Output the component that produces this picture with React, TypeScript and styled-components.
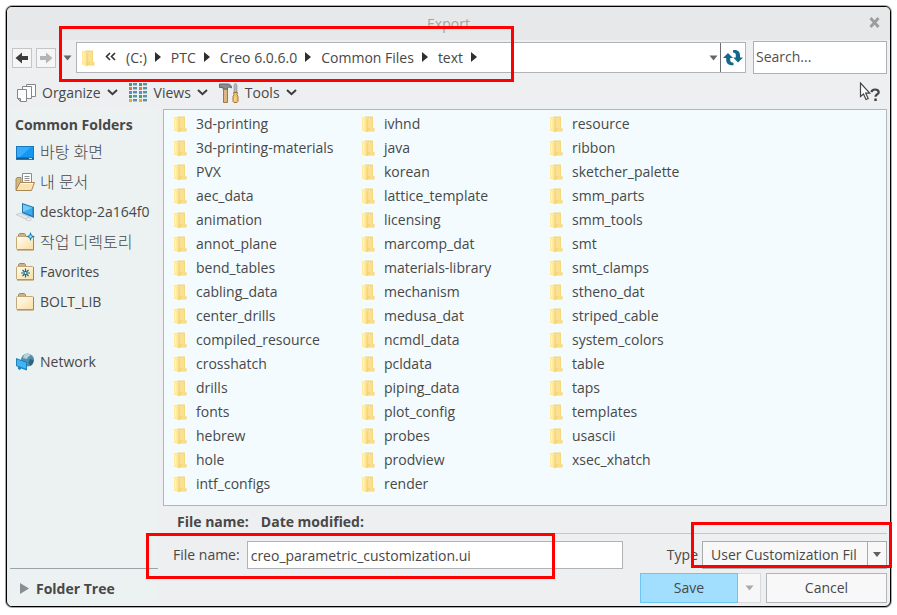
import React from "react";
import styled, { createGlobalStyle } from "styled-components";

const GlobalStyle = createGlobalStyle`
  *, *::before, *::after { box-sizing: border-box; }
  body { margin: 0; background: #fff; }
  body, button, input, select {
    font-family: "Open Sans", "Noto Sans CJK KR", sans-serif;
    font-size: 14px;
    line-height: 20px;
    color: #484848;
  }
  button { background: none; border: 0; padding: 0; margin: 0; cursor: pointer; white-space: nowrap; }
  svg { display: block; flex: none; }
`;

const Page = styled.div`
  padding: 6px;
`;

const Dialog = styled.section`
  border: 1px solid #000;
  border-radius: 6px;
  box-shadow: 0 0 0 1px #a9adaa;
  background: #eeeff1;
`;

const TitleBar = styled.header`
  position: relative;
  display: flex;
  align-items: center;
  justify-content: center;
  height: 33px;
  border-radius: 5px 5px 0 0;
  background: #e6e8e9;
`;

const Title = styled.h1`
  margin: 0;
  font-size: 14px;
  font-weight: 400;
  color: #a3a3a3;
`;

const CloseButton = styled.button`
  position: absolute;
  right: 10px;
  top: 10px;
`;

const NavRow = styled.div`
  display: flex;
  align-items: center;
  height: 35px;
  padding: 0 3px 0 5px;
`;

const HistoryButton = styled.button`
  display: grid;
  place-items: center;
  width: 20px;
  height: 20px;
  margin-right: 4px;
  border: 1px solid #c3c5c6;
  background: #f6f6f6;
`;

const HistoryMenu = styled.button`
  display: grid;
  place-items: center;
  width: 16px;
  height: 20px;
  padding-right: 2px;
`;

const AddressBar = styled.div`
  position: relative;
  display: flex;
  align-items: stretch;
  flex: 1;
  min-width: 0;
  height: 31px;
  border: 1px solid #b1b3b6;
  background: #fff;
`;

const Crumbs = styled.nav`
  display: flex;
  align-items: center;
  flex: 1;
  min-width: 0;
  overflow: hidden;
  padding-left: 4px;
  gap: 10px;
`;

const Crumb = styled.button`
  display: flex;
  align-items: center;
  gap: 8px;
`;

const AddressTool = styled.button<{ $divided?: boolean }>`
  display: grid;
  place-items: center;
  width: ${(p) => (p.$divided ? 25 : 14)}px;
  border-left: ${(p) => (p.$divided ? "1px solid #6c6e70" : "0")};
`;

const SearchBox = styled.input`
  width: 134px;
  height: 33px;
  margin-left: 7px;
  padding: 0 2px 2px;
  border: 1px solid #aeb1b4;
  border-radius: 0;
  background: #fff;
  &::placeholder { color: #505050; opacity: 1; }
`;

const ToolRow = styled.div`
  display: flex;
  align-items: center;
  gap: 11px;
  height: 34px;
  padding: 1px 9px 0;
`;

const ToolButton = styled.button`
  display: flex;
  align-items: center;
  gap: 6px;
`;

const HelpButton = styled.button`
  margin-left: auto;
`;

const Body = styled.div`
  display: grid;
  grid-template-columns: 148px minmax(0, 1fr);
  gap: 5px;
  padding: 0 3px;
`;

const Sidebar = styled.aside`
  display: flex;
  flex-direction: column;
  background: #ecf1f1;
`;

const SideHeading = styled.h2`
  height: 28px;
  margin: 0;
  padding: 6px 0 0 5px;
  font-size: 14px;
  line-height: 20px;
  font-weight: 700;
`;

const Places = styled.ul`
  flex: 1;
  margin: 0;
  padding: 0;
  list-style: none;
`;

const Place = styled.li<{ $apart?: boolean }>`
  margin-top: ${(p) => (p.$apart ? 30 : 0)}px;
`;

const PlaceButton = styled.button`
  display: flex;
  align-items: center;
  gap: 5px;
  height: 30px;
  padding-left: 5px;
  &:lang(ko) { font-size: 16px; font-weight: 300; }
`;

const TreeToggle = styled.button`
  display: flex;
  align-items: center;
  gap: 7px;
  height: 38px;
  padding: 2px 0 0 10px;
  border-top: 1px solid #9aa3a8;
  font-weight: 700;
`;

const Content = styled.main`
  display: flex;
  flex-direction: column;
  min-width: 0;
  padding-bottom: 3px;
`;

const FileList = styled.ul`
  display: grid;
  grid-auto-flow: column;
  grid-template-rows: repeat(16, 24px);
  grid-auto-columns: 188px;
  margin: 0;
  padding: 2px 0 9px 9px;
  overflow: hidden;
  list-style: none;
  border: 1px solid #b3b6b9;
  background: #f3fbfe;
`;

const FolderButton = styled.button`
  display: flex;
  align-items: center;
  gap: 9px;
  height: 24px;
`;

const MetaRow = styled.div`
  display: flex;
  gap: 12px;
  height: 28px;
  padding: 6px 14px 0;
  border-bottom: 1px solid #c4c7ca;
  font-weight: 700;
`;

const FieldRow = styled.div`
  display: flex;
  justify-content: space-between;
  gap: 44px;
  margin-top: 7px;
`;

const Field = styled.div<{ $grow?: boolean }>`
  position: relative;
  display: flex;
  align-items: center;
  flex: ${(p) => (p.$grow ? "1" : "none")};
  gap: ${(p) => (p.$grow ? 7 : 4)}px;
  padding-left: ${(p) => (p.$grow ? 10 : 0)}px;
`;

const NameInput = styled.input`
  flex: 1;
  min-width: 0;
  height: 28px;
  padding: 0 3px;
  border: 1px solid #b1b4b7;
  border-radius: 0;
  background: #fff;
`;

const SelectFrame = styled.div`
  display: flex;
  width: 185px;
  height: 28px;
  border: 1px solid #a9acaf;
  background: linear-gradient(90deg, #f8f8f8 164px, #a9acaf 164px 165px, #f8f8f8 165px);
`;

const TypeSelect = styled.select`
  width: 183px;
  padding: 0 30px 0 8px;
  appearance: none;
  border: 0;
  background: url("data:image/svg+xml,%3Csvg xmlns='http://www.w3.org/2000/svg' width='10' height='6'%3E%3Cpath d='M1 0h8L5 5z' fill='%23606060'/%3E%3C/svg%3E") no-repeat right 4px center;
`;

const Actions = styled.div`
  display: flex;
  justify-content: flex-end;
  margin-top: 4px;
`;

const SaveButton = styled.button`
  width: 98px;
  height: 30px;
  border: 1px solid #6bc6f5;
  background: #a2dfff;
`;

const SaveMenu = styled.button`
  display: grid;
  place-items: center;
  width: 23px;
  height: 30px;
  margin-right: 5px;
  border: 1px solid #d8dadc;
  border-left: 0;
  background: #f7f7f7;
`;

const CancelButton = styled.button`
  width: 121px;
  height: 30px;
  border: 1px solid #b3b5b8;
  background: #f8f8f8;
`;

/* Red call-out frames laid over the parts they point at. */
const Callout = styled.div`
  position: absolute;
  z-index: 2;
  border: 3px solid #fe0000;
  pointer-events: none;
`;

const PathCallout = styled(Callout)`
  left: -18px;
  top: -17px;
  width: 455px;
  height: 56px;
`;

const NameCallout = styled(Callout)`
  left: -17px;
  right: 68px;
  top: -8px;
  bottom: -10px;
`;

const TypeCallout = styled(Callout)`
  left: 24px;
  right: -5px;
  top: -19px;
  bottom: 1px;
`;

const CaretDown = ({ color = "#666" }: { color?: string }) => (
  <svg width="9" height="6" viewBox="0 0 9 6"><path d="M0.500 0.500h8l-4 5z" fill={color} /></svg>
);

const CaretRight = () => (
  <svg width="6" height="12" viewBox="0 0 6 12"><path d="M0 0l6 5-6 5z" fill="#2f2f2f" /></svg>
);

const Chevron = () => (
  <svg width="11" height="7" viewBox="0 0 11 7"><path d="M1 1l4.500 4.200L10 1" fill="none" stroke="#3d3d3d" strokeWidth="2" /></svg>
);

const HistoryArrow = ({ forward }: { forward?: boolean }) => (
  <svg width="14" height="12" viewBox="0 0 14 12">
    <path
      d={forward ? "M13.500 6L7 .5v3.500H1v4h6v3.500z" : "M.5 6L7 .5v3.500h6v4H7v3.500z"}
      fill={forward ? "#b4b4b4" : "#3c3c3c"}
    />
  </svg>
);

const FolderIcon = () => (
  <svg width="14" height="18" viewBox="0 0 14 18">
    <path d="M4 1.500h8v11.500h1.500v3.500H4z" fill="#f6d77c" />
    <path d="M6 3h5v10H6z" fill="#fae192" />
    <path d="M1 1.500l5 2v14l-5-2z" fill="#ffe99c" />
    <path d="M6 4v13" stroke="#efcb6c" />
    <path d="M2.500 4v10" stroke="#fff3c4" />
    <path d="M8.500 13.500h4v2h-4z" fill="#fbe08a" />
  </svg>
);

const RefreshIcon = () => (
  <svg width="20" height="18" viewBox="0 0 20 18" fill="#11688a">
    <path d="M0 9l5-5 5 5H7.200v2c0 1.700 1.100 2.700 3.300 2.700v2.500c-4.200.3-7.300-1.500-7.300-5.200V9z" />
    <path d="M20 8.500l-5 5-4.700-5h2.500V6.200c0-1.700-.8-2.600-2.800-2.700V1.200c4-.5 7 1.200 7 5v2.300z" />
  </svg>
);

const OrganizeIcon = () => (
  <svg width="20" height="20" viewBox="0 0 20 20" fill="#fdfdfd" stroke="#85888a">
    <path d="M10.500 1.500h9v12h-6l-3-3z" />
    <path d="M6.500 3.500h9v12h-6l-3-3z" />
    <path d="M1.500 6.500h9v12H4.500l-3-3z" />
    <path d="M1.500 15.500h3v3z" fill="#c9cccf" />
  </svg>
);

const ViewsIcon = () => (
  <svg width="19" height="19" viewBox="0 0 19 19">
    {[0, 10].map((x) =>
      ["#4a9b60", "#e66b5d", "#4a93cc", "#4a9b60", "#d9ae33"].map((c, i) => (
        <g key={`${x}-${i}`}>
          <rect x={x} y={i * 4} width="3" height="3" fill={c} />
          <rect x={x + 4} y={i * 4} width="4" height="3" fill="#5b91a6" />
          <path d={`M${x + 4} ${i * 4 + 2.5}h4`} stroke="#a9cbd8" />
        </g>
      ))
    )}
  </svg>
);

const ToolsIcon = () => (
  <svg width="20" height="20" viewBox="0 0 20 20">
    <path d="M4.500 6h4v13.500h-4z" fill="#dfb583" stroke="#9b7850" />
    <path d="M0.500 1h8.500c2 0 3.500 1.500 3.500 4-1.500-1-2.500-1-4-.5V6H4V4.500H.5z" fill="#8a8d90" stroke="#63666a" />
    <path d="M16.500 0l1.500 2v7h-3V2z" fill="#b4b8bb" stroke="#888c8f" strokeWidth="0.600" />
    <path d="M14.500 9.500h4l-.5 2 1 2v5l-1 1h-3l-1-1v-5l1-2z" fill="#eec36d" stroke="#a5763d" />
    <path d="M16 14v4" stroke="#fae0a0" />
  </svg>
);

const HelpIcon = () => (
  <svg width="23" height="21" viewBox="0 0 23 21">
    <path d="M2.500 1v13.500l3-2.500 2.500 5.500 2.200-1-2.500-5.300h4z" fill="#fff" stroke="#444" strokeWidth="1.200" />
    <path d="M13.500 10.200c.2-2 1.600-2.700 3.500-2.700s3.700.9 3.700 2.700c0 2.300-3.200 2.200-3.200 4.500" fill="none" stroke="#444" strokeWidth="2.200" />
    <rect x="16.300" y="16.500" width="2.500" height="2.500" fill="#444" />
  </svg>
);

const DesktopIcon = () => (
  <svg width="20" height="20" viewBox="0 0 20 20">
    <rect x="1" y="4" width="18" height="14" fill="#1b77bd" />
    <path d="M2 5h16v10H2z" fill="#1497f3" />
    <path d="M2 5h14L5 15H2z" fill="#35adfb" />
    <path d="M2 16.500h16" stroke="#0b5c99" />
    <path d="M14 16.500h3" stroke="#b9e0f6" />
  </svg>
);

const FolderBase = () => (
  <>
    <defs>
      <linearGradient id="manila" x1="0" y1="0" x2="1" y2="1">
        <stop offset="0" stopColor="#fffdf5" />
        <stop offset="1" stopColor="#fbdda0" />
      </linearGradient>
    </defs>
    <path d="M3.500 5V2.500l1-1h5l1 1V5" fill="#cbb384" stroke="#a18b62" />
    <rect x="1.500" y="4.500" width="17" height="13" rx="1" fill="url(#manila)" stroke="#c4a876" />
    <path d="M2 18h16.500V5" fill="none" stroke="#a3855a" />
  </>
);

const DocumentsIcon = () => (
  <svg width="20" height="20" viewBox="0 0 20 20">
    <path d="M1 18V7l1-1.500h4V18z" fill="#d2b780" stroke="#a58c5e" />
    <path d="M7.500 1.500h9v12h-9z" fill="#fff" stroke="#8c8c8c" />
    <path d="M9.500 4.500h5M9.500 6.500h5M9.500 8.500h5" stroke="#8f8f8f" />
    <path d="M5 10.500h14.500l-3 8H1z" fill="#fbe3b1" stroke="#a98752" />
    <path d="M6 11.500h12" stroke="#fff8e5" />
  </svg>
);

const ComputerIcon = () => (
  <svg width="20" height="20" viewBox="0 0 20 20">
    <path d="M7 1l12 4v11L7 11z" fill="#2776ad" />
    <path d="M8 2.500l9.500 3.300v8L8 10z" fill="#39acef" />
    <path d="M8 2.500l9.500 3.300L8 10z" fill="#73ccfa" />
    <path d="M8 12l6 2.500-1 2-7-2z" fill="#aeb5b9" />
    <path d="M1 12.500l4-1.500 10 4-4.500 2z" fill="#e3e7ea" stroke="#b3babf" strokeWidth="0.600" />
    <ellipse cx="13.500" cy="17.200" rx="2.800" ry="1.500" fill="#eef0f2" stroke="#b3babf" strokeWidth="0.600" />
  </svg>
);

const WorkingIcon = () => (
  <svg width="20" height="20" viewBox="0 0 20 20">
    <FolderBase />
    <path d="M15.500 0l1.300 3.200L20 4.500l-3.200 1.300-1.300 3.200-1.300-3.200L11 4.500l3.200-1.300z" fill="#167cab" />
    <circle cx="15.500" cy="4.500" r="1.200" fill="#9eeaff" />
  </svg>
);

const FavoritesIcon = () => (
  <svg width="20" height="20" viewBox="0 0 20 20">
    <FolderBase />
    <path d="M10.500 6.500v9M6 11h9M7.500 8l6 6M13.500 8l-6 6" stroke="#176a89" strokeWidth="1.200" />
    <circle cx="10.500" cy="11" r="1" fill="#f8f0dc" />
  </svg>
);

const PlainFolderIcon = () => (
  <svg width="20" height="20" viewBox="0 0 20 20"><FolderBase /></svg>
);

const NetworkIcon = () => (
  <svg width="20" height="20" viewBox="0 0 20 20">
    <circle cx="12.500" cy="8" r="6.500" fill="#4f8fac" />
    <path d="M9 3c2-2 6-1.500 7 0l-3 2-1 2-4-1z" fill="#b3d2d9" />
    <path d="M15 7l3.500 1c0 3-1 5-3 6l-2-3z" fill="#2c6482" />
    <path d="M1 6l11 4v8.500L6 16.500l-1 1.500-2-1v-2L1 14z" fill="#1c83c2" />
    <path d="M2 7.500l9 3.300v6L2 13.500z" fill="#41b5f4" />
  </svg>
);

const crumbs = ["(C:)", "PTC", "Creo 6.0.6.0", "Common Files", "text"];

const places = [
  { name: "바탕 화면", Icon: DesktopIcon, lang: "ko" },
  { name: "내 문서", Icon: DocumentsIcon, lang: "ko" },
  { name: "desktop-2a164f0", Icon: ComputerIcon },
  { name: "작업 디렉토리", Icon: WorkingIcon, lang: "ko" },
  { name: "Favorites", Icon: FavoritesIcon },
  { name: "BOLT_LIB", Icon: PlainFolderIcon },
  { name: "Network", Icon: NetworkIcon, apart: true },
];

const folders = [
  "3d-printing", "3d-printing-materials", "PVX", "aec_data", "animation", "annot_plane", "bend_tables",
  "cabling_data", "center_drills", "compiled_resource", "crosshatch", "drills", "fonts", "hebrew", "hole",
  "intf_configs", "ivhnd", "java", "korean", "lattice_template", "licensing", "marcomp_dat",
  "materials-library", "mechanism", "medusa_dat", "ncmdl_data", "pcldata", "piping_data", "plot_config",
  "probes", "prodview", "render", "resource", "ribbon", "sketcher_palette", "smm_parts", "smm_tools", "smt",
  "smt_clamps", "stheno_dat", "striped_cable", "system_colors", "table", "taps", "templates", "usascii",
  "xsec_xhatch",
];

const tools = [
  { name: "Organize", Icon: OrganizeIcon },
  { name: "Views", Icon: ViewsIcon },
  { name: "Tools", Icon: ToolsIcon },
];

export default function App() {
  return (
    <Page>
      <GlobalStyle />
      <Dialog role="dialog" aria-labelledby="dialog-title">
        <TitleBar>
          <Title id="dialog-title">Export</Title>
          <CloseButton aria-label="Close">
            <svg width="11" height="11" viewBox="0 0 11 11"><path d="M1.500 1l8 9M9.500 1l-8 9" stroke="#9c9c9c" strokeWidth="2.800" /></svg>
          </CloseButton>
        </TitleBar>

        <NavRow>
          <HistoryButton aria-label="Back"><HistoryArrow /></HistoryButton>
          <HistoryButton aria-label="Forward"><HistoryArrow forward /></HistoryButton>
          <HistoryMenu aria-label="Recent locations"><CaretDown /></HistoryMenu>
          <AddressBar>
            <Crumbs aria-label="Path">
              <FolderIcon />
              <Crumb aria-label="Parent folders">
                <svg width="11" height="12" viewBox="0 0 11 12"><path d="M5 1L1.500 4.500 5 8M10 1L6.500 4.500 10 8" fill="none" stroke="#333" strokeWidth="1.600" /></svg>
              </Crumb>
              {crumbs.map((c) => (
                <Crumb key={c}>{c}<CaretRight /></Crumb>
              ))}
            </Crumbs>
            <AddressTool aria-label="Path history"><CaretDown /></AddressTool>
            <AddressTool $divided aria-label="Refresh"><RefreshIcon /></AddressTool>
            <PathCallout />
          </AddressBar>
          <SearchBox type="search" aria-label="Search" placeholder="Search..." />
        </NavRow>

        <ToolRow>
          {tools.map(({ name, Icon }) => (
            <ToolButton key={name}><Icon />{name}<Chevron /></ToolButton>
          ))}
          <HelpButton aria-label="Help"><HelpIcon /></HelpButton>
        </ToolRow>

        <Body>
          <Sidebar>
            <SideHeading>Common Folders</SideHeading>
            <Places>
              {places.map(({ name, Icon, apart, lang }) => (
                <Place key={name} $apart={apart}>
                  <PlaceButton lang={lang}><Icon />{name}</PlaceButton>
                </Place>
              ))}
            </Places>
            <TreeToggle aria-expanded="false">
              <svg width="9" height="11" viewBox="0 0 9 11"><path d="M0 0l9 5.500L0 11z" fill="#8b8e90" /></svg>
              Folder Tree
            </TreeToggle>
          </Sidebar>

          <Content>
            <FileList>
              {folders.map((f) => (
                <li key={f}><FolderButton><FolderIcon />{f}</FolderButton></li>
              ))}
            </FileList>
            <MetaRow><span>File name:</span><span>Date modified:</span></MetaRow>
            <FieldRow>
              <Field $grow>
                <label htmlFor="file-name">File name:</label>
                <NameInput id="file-name" defaultValue="creo_parametric_customization.ui" />
                <NameCallout />
              </Field>
              <Field>
                <label htmlFor="file-type">Type</label>
                <SelectFrame>
                  <TypeSelect id="file-type"><option>User Customization File</option></TypeSelect>
                </SelectFrame>
                <TypeCallout />
              </Field>
            </FieldRow>
            <Actions>
              <SaveButton>Save</SaveButton>
              <SaveMenu aria-label="Save options"><CaretDown color="#aaa" /></SaveMenu>
              <CancelButton>Cancel</CancelButton>
            </Actions>
          </Content>
        </Body>
      </Dialog>
    </Page>
  );
}
